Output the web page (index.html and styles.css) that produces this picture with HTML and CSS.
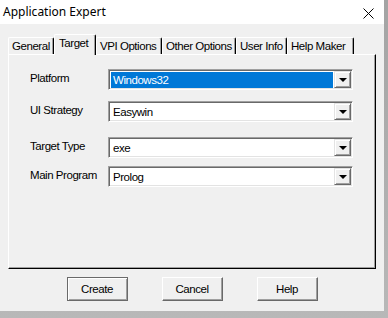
FILE: index.html
```html
<!DOCTYPE html>
<html lang="en">

<head>
    <meta charset="UTF-8">
    <title>Application Expert</title>
    <link rel="stylesheet" href="styles.css">
</head>

<body>
    <div class="window">
        <!-- Barra de titulo -->
        <div class="titlebar">
            <span class="title">Application Expert</span>
            <span class="close">
                <svg width="11" height="11" viewBox="0 0 11 11">
                    <path d="M0.5 0.5 L10.5 10.5 M10.5 0.5 L0.5 10.5" stroke="#000" stroke-width="1" fill="none"/>
                </svg>
            </span>
        </div>

        <div class="client">
            <!-- Pestanas -->
            <div class="tabs">
                <div class="tab">General</div>
                <div class="tab active">Target</div>
                <div class="tab">VPI Options</div>
                <div class="tab">Other Options</div>
                <div class="tab">User Info</div>
                <div class="tab">Help Maker</div>
            </div>

            <div class="panel">
                <div class="field">
                    <span class="label">Platform</span>
                    <div class="combo">
                        <span class="value selected">Windows32</span>
                        <span class="drop"><span class="arrow"></span></span>
                    </div>
                </div>
                <div class="field">
                    <span class="label">UI Strategy</span>
                    <div class="combo">
                        <span class="value">Easywin</span>
                        <span class="drop"><span class="arrow"></span></span>
                    </div>
                </div>
                <div class="field">
                    <span class="label">Target Type</span>
                    <div class="combo">
                        <span class="value">exe</span>
                        <span class="drop"><span class="arrow"></span></span>
                    </div>
                </div>
                <div class="field">
                    <span class="label">Main Program</span>
                    <div class="combo">
                        <span class="value">Prolog</span>
                        <span class="drop"><span class="arrow"></span></span>
                    </div>
                </div>
            </div>

            <!-- Botones -->
            <div class="buttons">
                <button class="btn default">Create</button>
                <button class="btn">Cancel</button>
                <button class="btn">Help</button>
            </div>
        </div>
    </div>
</body>

</html>
```

FILE: styles.css
```css
/* Estilos generales */
body {
    margin: 0;
    width: 388px;
    height: 318px;
    overflow: hidden;
    background: linear-gradient(#a4a4a4, #b8b8b8);
    font-family: "Liberation Sans", Arial, sans-serif;
    font-size: 11.5px;
    letter-spacing: -0.45px;
    color: #000;
}

.window {
    width: 384px;
    height: 311px;
    background: #f0f0f0;
    display: flex;
    flex-direction: column;
}

/* Barra de titulo */
.titlebar {
    height: 24px;
    background: #fff;
    display: flex;
    align-items: center;
    justify-content: space-between;
    padding: 0 10px 0 3px;
}

.title {
    font-family: "Noto Sans", "Open Sans", sans-serif;
    font-size: 12px;
    letter-spacing: 0;
    margin-top: -1px;
}

.close {
    display: flex;
    margin-top: 2px;
}

/* Contenido */
.client {
    padding: 10px 8px 0 8px;
}

/* Pestanas */
.tabs {
    display: flex;
    align-items: flex-end;
    height: 20px;
    position: relative;
    z-index: 2;
}

.tab {
    box-sizing: border-box;
    height: 17px;
    line-height: 16px;
    padding-left: 3px;
    border-top: 1px solid #fff;
    border-left: 1px solid #fff;
    border-right: 1px solid #000;
    box-shadow: inset -1px 0 #a0a0a0;
    border-radius: 2px 2px 0 0;
    background: #f0f0f0;
    white-space: nowrap;
}

.tab.active {
    height: 21px;
    line-height: 17px;
    padding-left: 4px;
    margin-bottom: -1px;
}

.tab:nth-child(1) {
    width: 46px;
}

.tab:nth-child(2) {
    width: 42px;
}

.tab:nth-child(3) {
    width: 66px;
}

.tab:nth-child(4) {
    width: 74px;
}

.tab:nth-child(5) {
    width: 51px;
}

.tab:nth-child(6) {
    width: 67px;
}

/* Panel */
.panel {
    height: 199px;
    border-top: 1px solid #fff;
    border-left: 1px solid #fff;
    border-right: 1px solid #000;
    border-bottom: 1px solid #000;
    box-shadow: inset -1px -1px #a0a0a0;
    padding: 14px 21px 0 21px;
}

.field {
    display: flex;
    align-items: center;
}

.field:nth-child(1) {
    margin-bottom: 11px;
}

.field:nth-child(2) {
    margin-bottom: 15px;
}

.field:nth-child(3) {
    margin-bottom: 8px;
}

.label {
    width: 78px;
    margin-top: -3px;
    white-space: nowrap;
}

/* Combo */
.combo {
    width: 241px;
    height: 17px;
    padding: 1px;
    background: #fff;
    border-style: solid;
    border-width: 1px;
    border-color: #a0a0a0 #fff #fff #a0a0a0;
    box-shadow: inset 1px 1px #696969, inset -1px -1px #e3e3e3;
    display: flex;
}

.value {
    flex: 1;
    margin: 1px 1px 0 1px;
    padding-left: 2px;
    line-height: 16px;
}

.value.selected {
    background: #0078d7;
    color: #fff;
}

.drop {
    width: 17px;
    height: 17px;
    box-sizing: border-box;
    border-style: solid;
    border-width: 1px;
    border-color: #e3e3e3 #696969 #696969 #e3e3e3;
    box-shadow: inset 1px 1px #fff, inset -1px -1px #a0a0a0;
    background: #f0f0f0;
    display: flex;
    align-items: center;
    justify-content: center;
}

.arrow {
    width: 0;
    height: 0;
    border-left: 4px solid transparent;
    border-right: 4px solid transparent;
    border-top: 4px solid #000;
    margin-top: 1px;
}

/* Botones */
.buttons {
    display: flex;
    justify-content: center;
    gap: 34px;
    margin-top: 8px;
}

.btn {
    width: 61px;
    height: 24px;
    padding: 0;
    font: inherit;
    letter-spacing: inherit;
    color: #000;
    background: #f0f0f0;
    border-style: solid;
    border-width: 1px;
    border-color: #fff #696969 #696969 #fff;
    box-shadow: inset -1px -1px #a0a0a0;
}

.btn.default {
    border-color: #6a6a6a;
    box-shadow: inset 1px 1px #fff, inset -1px -1px #a0a0a0;
}
```
